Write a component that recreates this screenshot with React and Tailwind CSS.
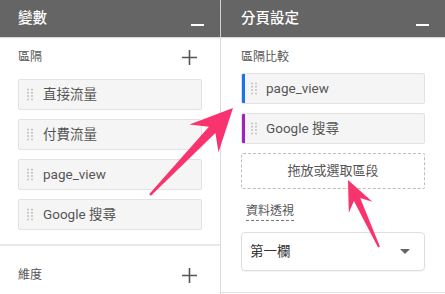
import React from 'react';

const FONT = { fontFamily: 'Roboto, "Noto Sans CJK TC", "Noto Sans", sans-serif' };

// little 2x4 dot grip shown at the left of each chip
const Grip = () => (
  <svg width="6" height="13" viewBox="0 0 6 13" className="shrink-0">
    {[1.5, 4.8, 8.1, 11.4].map((y) => (
      <g key={y} fill="#c2c2c2">
        <circle cx="1" cy={y} r="1" />
        <circle cx="5" cy={y} r="1" />
      </g>
    ))}
  </svg>
);

const Plus = () => (
  <svg width="15" height="15" viewBox="0 0 15 15">
    <path d="M7.5 0v15M0 7.5h15" stroke="#555" strokeWidth="1.6" />
  </svg>
);

const Minus = () => <div className="w-[13px] h-[2px] bg-white mt-[24px]" />;

const Chip = ({ label, bar }) => (
  <div className="h-[31px] flex items-center bg-[#f5f5f5] border border-[#e2e2e2] rounded-[2px] overflow-hidden">
    {bar && <div className={`w-[3px] self-stretch -my-px ${bar}`} />}
    <div className={`flex items-center ${bar ? 'pl-[6px] gap-[9px]' : 'pl-[8px] gap-[10px]'}`}>
      <Grip />
      <span className="text-[13.5px] text-[#555]">{label}</span>
    </div>
  </div>
);

// polygon for a skitch style arrow: thin tail, wide swept head
const arrow = (tail, tip, headLen, halfW, w0, w1) => {
  const dx = tip[0] - tail[0];
  const dy = tip[1] - tail[1];
  const len = Math.hypot(dx, dy);
  const ux = dx / len, uy = dy / len;
  const nx = -uy, ny = ux;
  const at = (d, o) => [tip[0] - ux * d + nx * o, tip[1] - uy * d + ny * o];
  const pts = [
    [tail[0] + nx * w0, tail[1] + ny * w0],
    at(headLen * 0.72, w1),
    at(headLen, halfW),
    tip,
    at(headLen, -halfW),
    at(headLen * 0.72, -w1),
    [tail[0] - nx * w0, tail[1] - ny * w0],
  ];
  return pts.map((p) => p.map((v) => v.toFixed(1)).join(',')).join(' ');
};

export default function App() {
  return (
    <div className="relative w-[445px] h-[294px] bg-white overflow-hidden flex" style={FONT}>
      {/* left panel */}
      <div className="w-[221px] shrink-0 border-r border-[#dcdcdc] flex flex-col">
        <div className="h-[37px] bg-[#656565] flex items-start justify-between pl-[18px] pr-[16px] shadow-[0_1px_1px_rgba(0,0,0,0.15)]">
          <span className="text-white text-[14.5px] font-medium leading-[37px]">變數</span>
          <Minus />
        </div>
        <div className="px-[18px] pt-[10px] pb-[14px] border-b-2 border-[#e8e8e8]">
          <div className="h-[20px] flex items-center justify-between pr-[5px]">
            <span className="text-[12px] text-[#555]">區隔</span>
            <Plus />
          </div>
          <div className="mt-[12px] flex flex-col gap-[9px]">
            <Chip label="直接流量" />
            <Chip label="付費流量" />
            <Chip label="page_view" />
            <Chip label="Google 搜尋" />
          </div>
        </div>
        <div className="px-[18px] pt-[19px]">
          <div className="h-[20px] flex items-center justify-between pr-[5px]">
            <span className="text-[12px] text-[#555]">維度</span>
            <Plus />
          </div>
        </div>
      </div>

      {/* right panel */}
      <div className="flex-1 flex flex-col">
        <div className="h-[37px] bg-[#656565] flex items-start justify-between pl-[20px] pr-[16px] shadow-[0_1px_1px_rgba(0,0,0,0.15)]">
          <span className="text-white text-[14.5px] font-medium leading-[37px]">分頁設定</span>
          <Minus />
        </div>
        <div className="px-[20px] pt-[10px]">
          <div className="h-[20px] flex items-center">
            <span className="text-[12px] text-[#555]">區隔比較</span>
          </div>
          <div className="mt-[6px] flex flex-col gap-[9px]">
            <Chip label="page_view" bar="bg-[#1a73e8]" />
            <Chip label="Google 搜尋" bar="bg-[#a020c0]" />
            <div className="h-[36px] border border-dashed border-[#bdbdbd] rounded-[2px] flex items-center justify-center">
              <span className="text-[13px] text-[#555]">拖放或選取區段</span>
            </div>
          </div>
          <div className="mt-[13px] ml-[5px] h-[20px] flex items-start">
            <span className="text-[12px] text-[#555] leading-[18px] border-b border-dashed border-[#777]">資料透視</span>
          </div>
          <div className="mt-[10px] h-[39px] border border-[#dedede] rounded-[4px] flex items-center justify-between pl-[8px] pr-[14px] shadow-[0_1px_1px_rgba(0,0,0,0.05)]">
            <span className="text-[13.5px] text-[#333]">第一欄</span>
            <svg width="10" height="5" viewBox="0 0 10 5">
              <path d="M0 0h10L5 5z" fill="#666" />
            </svg>
          </div>
        </div>
        <div className="mt-[21px] border-t border-[#e0e0e0]" />
      </div>

      {/* annotation arrows */}
      <svg className="absolute inset-0 pointer-events-none" width="445" height="294">
        <polygon points={arrow([150, 195], [233, 108], 42, 20, 1.2, 4.5)} fill="#f9336d" />
        <polygon points={arrow([379, 247], [348, 180], 30, 13, 1, 3.5)} fill="#f9336d" />
      </svg>
    </div>
  );
}
